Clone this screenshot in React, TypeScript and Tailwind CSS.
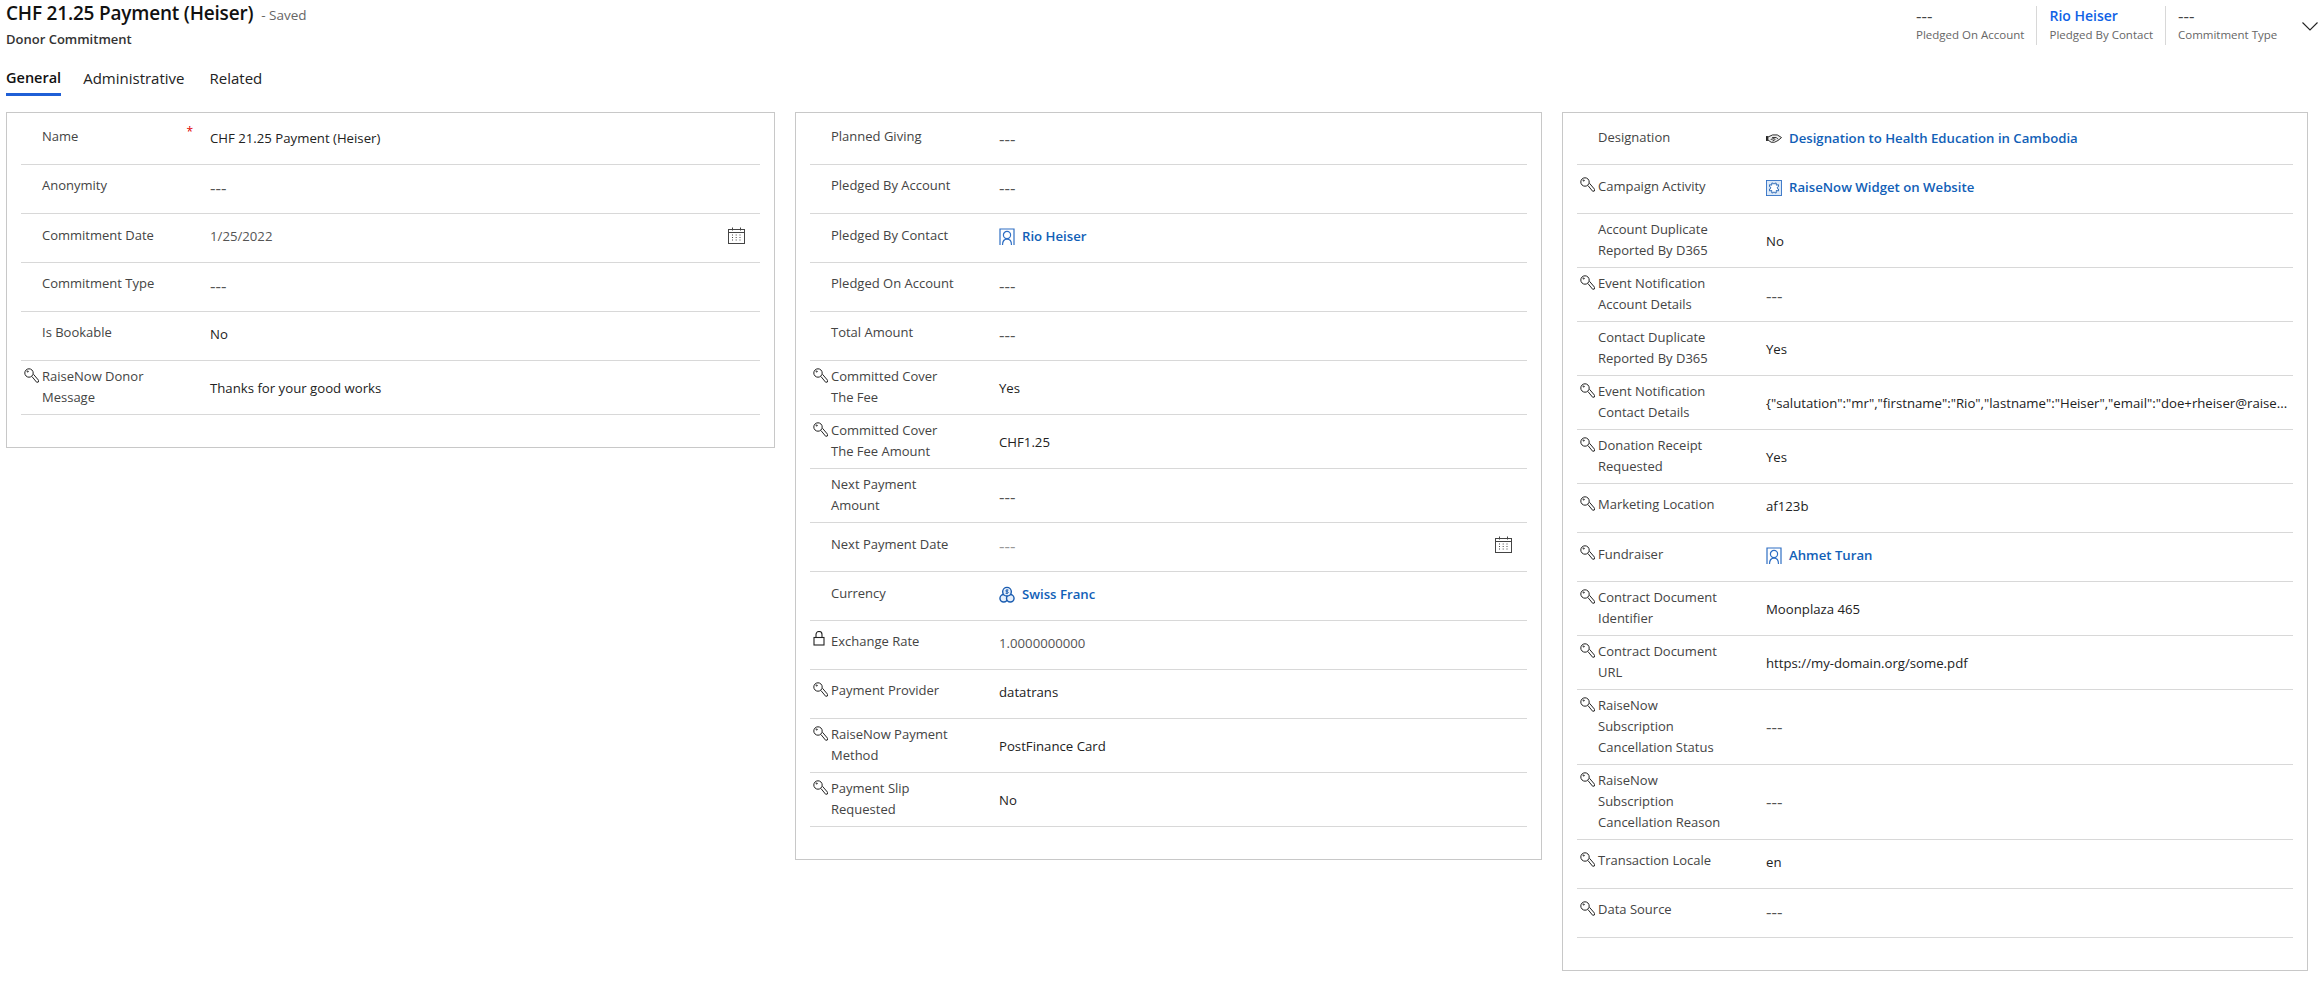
const font = "[font-family:'Open_Sans','Noto_Sans',sans-serif]";

function KeyIcon() {
  return (
    <svg viewBox="0 0 15 15" className="w-[15px] h-[15px]" fill="none" stroke="#222" strokeWidth="1">
      <circle cx="5" cy="5" r="4.200" />
      <path d="M8 8.600l4.700 5.700 1.700-.3.200-1.700-5.100-6" />
      <circle cx="3.700" cy="3.500" r=".6" />
    </svg>
  );
}

function LockIcon() {
  return (
    <svg viewBox="0 0 12 15" className="w-[12px] h-[15px]" fill="none" stroke="#222" strokeWidth="1.100">
      <rect x="1" y="6.500" width="10" height="7.500" />
      <path d="M3 6.500V3.500a3 3 0 0 1 6 0v3" />
    </svg>
  );
}

function CalendarIcon() {
  return (
    <svg viewBox="0 0 17 17" className="w-[17px] h-[17px]" fill="none" stroke="#444" strokeWidth="1">
      <rect x=".5" y="2.500" width="16" height="14" />
      <path d="M.5 5.500h16M4.500 .5v3M12.500 .5v3" />
      <path
        d="M4 8h1.500M7.700 8h1.500M11.500 8h1.500M4 10.500h1.500M7.700 10.500h1.500M11.500 10.500h1.500M4 13h1.500M7.700 13h1.500M11.500 13h1.500"
        strokeDasharray="1 .5"
      />
    </svg>
  );
}

function ContactIcon() {
  return (
    <svg viewBox="0 0 16 18" className="w-[16px] h-[18px]" fill="none" stroke="#2f6fc4" strokeWidth="1.200">
      <path d="M1 17V1h14v16" />
      <circle cx="8" cy="7" r="3.600" />
      <path d="M3.500 17c0-3.500 1.500-5.800 4.500-5.800s4.500 2.300 4.500 5.800" />
    </svg>
  );
}

function CurrencyIcon() {
  return (
    <svg viewBox="0 0 17 18" className="w-[17px] h-[18px]" fill="#e6effa" stroke="#1a5cb0" strokeWidth="1.500">
      <circle cx="5" cy="12.500" r="4" />
      <circle cx="12" cy="12.500" r="4" />
      <circle cx="8.500" cy="5.500" r="4.600" />
      <path d="M10 3.800H7.800a1 1 0 0 0 0 1.700h1.400a1 1 0 0 1 0 1.700H7M8.500 2.800v5.200" strokeWidth="1" fill="none" />
    </svg>
  );
}

function CampaignIcon() {
  return (
    <svg viewBox="0 0 18 18" className="w-[18px] h-[18px]" fill="none">
      <rect x=".5" y=".5" width="17" height="17" fill="#dce9f8" stroke="#2f6fc4" />
      <path
        d="M6.500 3.500h1.500a1 1 0 0 0 2 0h1.500v2.300l2.500-.5v2.200a1.300 1.300 0 0 0 0 2.600v2.200l-2.500-.5v2.700H10a1 1 0 0 0-2 0H6.500v-2.700l-2.500.5v-2.200a1.300 1.300 0 0 0 0-2.600V5.300l2.500.5z"
        fill="#fff"
        stroke="#1a5cb0"
      />
    </svg>
  );
}

function HandIcon() {
  return (
    <svg viewBox="0 0 17 9" className="w-[17px] h-[9px]" fill="none" stroke="#222" strokeWidth="1">
      <path d="M0 2.500h2v4H0z" fill="#222" />
      <path d="M2 3l5-2.300h5L16.500 3.500 13 6.500 9 8.500H5.500L2 6z" fill="#eee" />
      <path d="M6.500 3.500h4.500L13 5.500M5 5.500l4-1M7 7l3-1.500" />
    </svg>
  );
}

const linkIcons = {
  contact: <ContactIcon />,
  currency: <CurrencyIcon />,
  campaign: <CampaignIcon />,
  hand: <HandIcon />,
};

type RowData = {
  label: string;
  value?: string;
  icon?: 'key' | 'lock';
  required?: boolean;
  link?: keyof typeof linkIcons;
  date?: boolean;
  muted?: boolean;
};

function FieldRow({ label, value = '---', icon, required, link, date, muted }: RowData) {
  const lines = label.split('\n').length;
  const empty = value === '---';
  return (
    <div
      className={
        'flex border-b border-[#d8d8d8] ' +
        (lines === 3 ? 'h-[75px]' : lines === 2 ? 'h-[54px]' : 'h-[49px]')
      }
    >
      <div className="w-[189px] shrink-0 flex items-start">
        <div
          className={
            'w-[21px] shrink-0 pl-[3px] ' +
            (icon === 'lock' ? 'pt-[10px]' : lines > 1 ? 'pt-[7px]' : 'pt-[12px]')
          }
        >
          {icon === 'key' && <KeyIcon />}
          {icon === 'lock' && <LockIcon />}
        </div>
        <div
          className={
            'flex-1 text-[#444] whitespace-pre-line leading-[21px] ' +
            (lines > 1 ? 'pt-[5px]' : link || date ? 'pt-[11px]' : 'pt-[10px]')
          }
        >
          {label}
        </div>
        {required && <span className="pr-[17px] pt-[10px] text-[#e00000] text-[12px] leading-[12px]">*</span>}
      </div>
      <div
        className={
          'flex-1 min-w-0 flex items-center pr-[4px] text-[13.200px] ' +
          (lines === 2 ? 'pt-[3px]' : lines === 1 ? 'pb-[2px]' : '')
        }
      >
        {link ? (
          <span className="flex items-center gap-[7px] text-[#1160b7] font-semibold">
            <span className="w-[16px] flex justify-center">{linkIcons[link]}</span>
            {value}
          </span>
        ) : (
          <span
            className={
              'whitespace-nowrap ' +
              (empty ? 'text-[17px] leading-[20px] ' : '') +
              (muted ? (empty ? 'text-[#999]' : 'text-[#555]') : empty ? 'text-[#555]' : 'text-[#222]')
            }
          >
            {value}
          </span>
        )}
        {date && (
          <span className="ml-auto pr-[11px] pb-[3px]">
            <CalendarIcon />
          </span>
        )}
      </div>
    </div>
  );
}

function Card({ rows, className }: { rows: RowData[]; className: string }) {
  return (
    <div className={'border border-[#c8c8c8] pt-[3px] px-[14px] ' + className}>
      {rows.map((r) => (
        <FieldRow key={r.label} {...r} />
      ))}
    </div>
  );
}

const col1: RowData[] = [
  { label: 'Name', value: 'CHF 21.25 Payment (Heiser)', required: true },
  { label: 'Anonymity' },
  { label: 'Commitment Date', value: '1/25/2022', date: true, muted: true },
  { label: 'Commitment Type' },
  { label: 'Is Bookable', value: 'No' },
  { label: 'RaiseNow Donor\nMessage', value: 'Thanks for your good works', icon: 'key' },
];

const col2: RowData[] = [
  { label: 'Planned Giving' },
  { label: 'Pledged By Account' },
  { label: 'Pledged By Contact', value: 'Rio Heiser', link: 'contact' },
  { label: 'Pledged On Account' },
  { label: 'Total Amount' },
  { label: 'Committed Cover\nThe Fee', value: 'Yes', icon: 'key' },
  { label: 'Committed Cover\nThe Fee Amount', value: 'CHF1.25', icon: 'key' },
  { label: 'Next Payment\nAmount' },
  { label: 'Next Payment Date', date: true, muted: true },
  { label: 'Currency', value: 'Swiss Franc', link: 'currency' },
  { label: 'Exchange Rate', value: '1.0000000000', icon: 'lock', muted: true },
  { label: 'Payment Provider', value: 'datatrans', icon: 'key' },
  { label: 'RaiseNow Payment\nMethod', value: 'PostFinance Card', icon: 'key' },
  { label: 'Payment Slip\nRequested', value: 'No', icon: 'key' },
];

const col3: RowData[] = [
  { label: 'Designation', value: 'Designation to Health Education in Cambodia', link: 'hand' },
  { label: 'Campaign Activity', value: 'RaiseNow Widget on Website', link: 'campaign', icon: 'key' },
  { label: 'Account Duplicate\nReported By D365', value: 'No' },
  { label: 'Event Notification\nAccount Details', icon: 'key' },
  { label: 'Contact Duplicate\nReported By D365', value: 'Yes' },
  {
    label: 'Event Notification\nContact Details',
    value: '{"salutation":"mr","firstname":"Rio","lastname":"Heiser","email":"doe+rheiser@raise...',
    icon: 'key',
  },
  { label: 'Donation Receipt\nRequested', value: 'Yes', icon: 'key' },
  { label: 'Marketing Location', value: 'af123b', icon: 'key' },
  { label: 'Fundraiser', value: 'Ahmet Turan', link: 'contact', icon: 'key' },
  { label: 'Contract Document\nIdentifier', value: 'Moonplaza 465', icon: 'key' },
  { label: 'Contract Document\nURL', value: 'https://my-domain.org/some.pdf', icon: 'key' },
  { label: 'RaiseNow\nSubscription\nCancellation Status', icon: 'key' },
  { label: 'RaiseNow\nSubscription\nCancellation Reason', icon: 'key' },
  { label: 'Transaction Locale', value: 'en', icon: 'key' },
  { label: 'Data Source', icon: 'key' },
];

function HeaderField({ value, label, link }: { value: string; label: string; link?: boolean }) {
  return (
    <div className="flex flex-col">
      <span
        className={
          'leading-[20px] ' + (link ? 'text-[14px] text-[#0f62e6] font-semibold' : 'text-[17px] text-[#444]')
        }
      >
        {value}
      </span>
      <span className="text-[11.500px] leading-[18px] text-[#666]">{label}</span>
    </div>
  );
}

export default function App() {
  return (
    <div className={'w-[2319px] h-[992px] bg-white overflow-hidden text-[13px] ' + font}>
      <div className="flex justify-between h-[62px]">
        <div className="pl-[6px]">
          <div className="flex items-baseline gap-[8px] leading-[27px]">
            <span className="text-[19px] tracking-[-0.200px] font-semibold text-[#111]">CHF 21.25 Payment (Heiser)</span>
            <span className="text-[13.500px] text-[#666]">- Saved</span>
          </div>
          <div className="text-[13px] font-semibold text-[#333] leading-[20px]">Donor Commitment</div>
        </div>
        <div className="flex items-start pt-[6px]">
          <div className="pr-[12px]">
            <HeaderField value="---" label="Pledged On Account" />
          </div>
          <div className="border-l border-[#d8d8d8] pl-[12px] pr-[12px] h-[39px]">
            <HeaderField value="Rio Heiser" label="Pledged By Contact" link />
          </div>
          <div className="border-l border-[#d8d8d8] pl-[12px] w-[137px] h-[39px]">
            <HeaderField value="---" label="Commitment Type" />
          </div>
          <svg viewBox="0 0 16 9" className="w-[16px] h-[9px] mt-[16px] mr-[1px]" fill="none" stroke="#222" strokeWidth="1.100">
            <path d="M.5 .5L8 8l7.500-7.500" />
          </svg>
        </div>
      </div>

      <div className="flex h-[34px] pl-[6px] gap-[22px] text-[15px]">
        <div className="h-[34px] border-b-[3px] border-[#1f5fd6] font-semibold text-[14.500px] text-[#111] leading-[32px]">
          General
        </div>
        <div className="text-[#222] leading-[32px]">Administrative</div>
        <div className="ml-[3px] text-[#222] leading-[32px]">Related</div>
      </div>

      <div className="flex items-start gap-[20px] pl-[6px] pt-[16px]">
        <Card rows={col1} className="w-[769px] h-[336px]" />
        <Card rows={col2} className="w-[747px] h-[748px]" />
        <Card rows={col3} className="w-[746px] h-[859px]" />
      </div>
    </div>
  );
}
